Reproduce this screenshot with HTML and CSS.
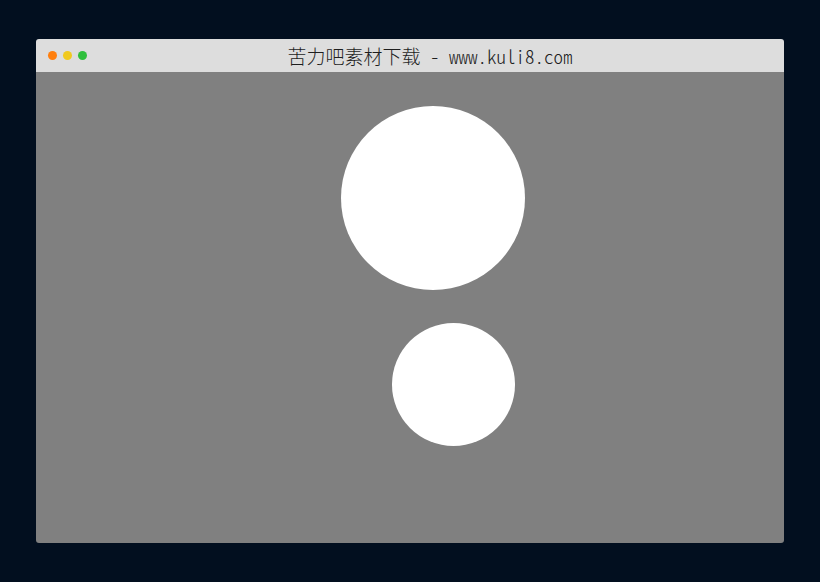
FILE: index.html
```html
<!DOCTYPE html>
<html lang="zh">
<head>
<meta charset="utf-8">
<title>苦力吧素材下载</title>
<link rel="stylesheet" href="styles.css">
</head>
<body>
<div class="window">
  <div class="titlebar">
    <div class="dots">
      <span class="dot dot-orange"></span>
      <span class="dot dot-yellow"></span>
      <span class="dot dot-green"></span>
    </div>
    <div class="title">苦力吧素材下载 - www.kuli8.com</div>
  </div>
  <div class="stage">
    <div class="ball ball-big"></div>
    <div class="ball ball-small"></div>
  </div>
</div>
</body>
</html>
```

FILE: styles.css
```css
html, body {
  margin: 0;
  padding: 0;
}
body {
  width: 820px;
  height: 582px;
  background: #020f1f;
  font-family: "Noto Sans CJK SC", "Noto Sans", sans-serif;
  overflow: hidden;
  padding-top: 39px;
  box-sizing: border-box;
}
.window {
  width: 748px;
  height: 504px;
  margin-left: 36px;
  border-radius: 3px;
  overflow: hidden;
  display: flex;
  flex-direction: column;
}
.titlebar {
  height: 33px;
  background: #dddddd;
  display: flex;
  align-items: center;
}
.dots {
  width: 40px;
  box-sizing: border-box;
  padding-left: 12px;
  display: flex;
  gap: 6px;
}
.dot {
  width: 9px;
  height: 9px;
  border-radius: 50%;
  display: block;
  flex: none;
}
.dot-orange { background: #ff7f0e; }
.dot-yellow { background: #f0c91f; }
.dot-green { background: #2fbf3c; }
.title {
  flex: 1;
  text-align: center;
  font-family: "Noto Sans CJK SC", sans-serif;
  font-feature-settings: "hwid" 1;
  font-size: 19px;
  font-weight: 300;
  color: #1e1e1e;
  line-height: 33px;
}
.stage {
  flex: 1;
  background: #808080;
  position: relative;
}
.ball {
  position: absolute;
  background: #ffffff;
  border-radius: 50%;
}
.ball-big {
  width: 184px;
  height: 184px;
  left: 305px;
  top: 34px;
}
.ball-small {
  width: 123px;
  height: 123px;
  left: 356px;
  top: 251px;
}
```
